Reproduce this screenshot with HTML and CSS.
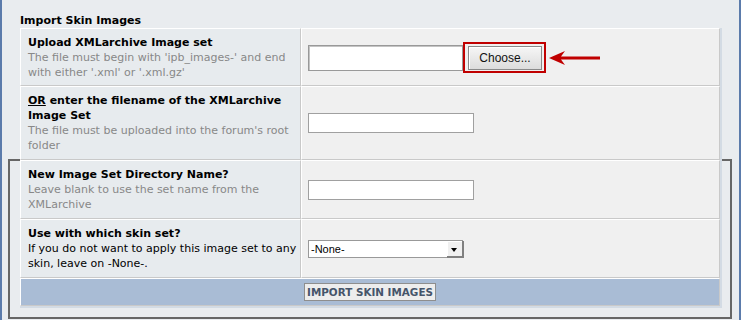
FILE: index.html
```html
<!DOCTYPE html>
<html lang="en">
<head>
  <meta charset="UTF-8">
  <title>Import Skin Images</title>
  <link rel="stylesheet" href="styles.css">
</head>
<body>

  <div class="page">
    <h2 class="section-title">Import Skin Images</h2>

    <div class="frame">
      <table class="form-table">
        <tr class="first-row">
          <td class="label-cell">
            <b>Upload XMLarchive Image set</b>
            <div class="desc">The file must begin with 'ipb_images-' and end with either '.xml' or '.xml.gz'</div>
          </td>
          <td class="field-cell">
            <div class="upload">
              <input type="text" class="file-text">
              <span class="highlight"><button class="choose-btn">Choose...</button></span>
              <svg class="arrow" width="52" height="16" viewBox="0 0 52 16">
                <path d="M0 8 L16 1 L12 6.5 L51 6.5 L51 9.5 L12 9.5 L16 15 Z" fill="#c00000"/>
              </svg>
            </div>
          </td>
        </tr>
        <tr>
          <td class="label-cell">
            <b><u>OR</u> enter the filename of the XMLarchive Image Set</b>
            <div class="desc">The file must be uploaded into the forum's root folder</div>
          </td>
          <td class="field-cell"><input type="text" class="text-input"></td>
        </tr>
        <tr>
          <td class="label-cell">
            <b>New Image Set Directory Name?</b>
            <div class="desc">Leave blank to use the set name from the XMLarchive</div>
          </td>
          <td class="field-cell"><input type="text" class="text-input"></td>
        </tr>
        <tr>
          <td class="label-cell">
            <b>Use with which skin set?</b>
            <div>If you do not want to apply this image set to any skin, leave on -None-.</div>
          </td>
          <td class="field-cell">
            <span class="select-wrap">
              <select class="skin-select">
                <option>-None-</option>
              </select>
            </span>
          </td>
        </tr>
        <tr>
          <td class="submit-row" colspan="2">
            <button class="submit-btn">IMPORT SKIN IMAGES</button>
          </td>
        </tr>
      </table>
    </div>
  </div>

</body>
</html>
```

FILE: styles.css
```css
body {
  margin: 0;
  background: #e9ecef;
  color: #000;
  font-family: 'DejaVu Sans', Verdana, sans-serif;
  font-size: 11px;
}

.page {
  height: 320px;
  box-sizing: border-box;
  border-left: 2px solid #5b7bab;
  border-right: 2px solid #5b7bab;
  padding: 13px 7px 0 6px;
  overflow: hidden;
}

.section-title {
  margin: 0 0 0 12px;
  font-size: 11px;
  line-height: 15px;
}

.frame {
  margin-top: 131px;
  border: 2px solid #666;
  padding: 0 8px 9px 10px;
}

.form-table {
  margin-top: -133px;
  width: 702px;
  border-collapse: separate;
  border-spacing: 0;
  border-right: 2px solid #d3dbe4;
  border-bottom: 2px solid #d3dbe4;
}

.form-table td {
  border-top: 1px solid #fff;
  border-left: 1px solid #fff;
  border-right: 1px solid #c9c9c9;
  border-bottom: 1px solid #c9c9c9;
  padding: 6px 7px;
  line-height: 15px;
  vertical-align: middle;
}

.form-table .first-row td {
  padding-bottom: 5px;
}

.form-table td.label-cell {
  width: 271px;
  padding-right: 1px;
  background: #e7ebee;
}

.form-table td.field-cell {
  padding-left: 6px;
  background: #f0f0f0;
}

.desc {
  color: #888;
}

.upload {
  display: flex;
  align-items: center;
}

.file-text {
  width: 155px;
  height: 26px;
  box-sizing: border-box;
  border: 1px solid #999;
  box-shadow: inset 1px 1px 0 #c4c4c4;
  margin: 0;
}

.highlight {
  display: inline-block;
  border: 2px solid #c00000;
  padding: 2px 2px 1px 3px;
}

.choose-btn {
  display: block;
  width: 74px;
  height: 24px;
  border: 1px solid #8a8a8a;
  background: linear-gradient(#f6f6f6, #dcdcdc);
  box-shadow: inset 1px 1px 0 #fff;
  font-family: 'Liberation Sans', Arial, sans-serif;
  font-size: 12px;
  color: #111;
  padding: 0;
}

.arrow {
  display: block;
  margin-left: 3px;
}

.text-input {
  width: 166px;
  height: 20px;
  box-sizing: border-box;
  border: 1px solid #a0a0a0;
  background: #fff;
  margin: 0;
  vertical-align: middle;
}

.select-wrap {
  position: relative;
  display: inline-block;
  vertical-align: middle;
}

.skin-select {
  appearance: none;
  -webkit-appearance: none;
  display: block;
  width: 155px;
  height: 18px;
  margin: 0;
  padding: 0 2px;
  border: 1px solid #999;
  border-radius: 0;
  background: #fff;
  font-family: 'Liberation Sans', Arial, sans-serif;
  font-size: 11px;
  color: #000;
}

.select-wrap::after {
  content: "";
  position: absolute;
  top: 1px;
  right: -1px;
  width: 15px;
  height: 15px;
  background: #f0f0f0;
  border-right: 2px solid #808080;
  border-bottom: 2px solid #808080;
  box-shadow: inset 1px 1px 0 #fff;
}

.select-wrap::before {
  content: "";
  position: absolute;
  top: 8px;
  right: 6px;
  border-left: 3px solid transparent;
  border-right: 3px solid transparent;
  border-top: 4px solid #000;
  z-index: 1;
}

.form-table td.submit-row {
  background: #a9bcd5;
  text-align: center;
  padding: 4px 0;
}

.submit-btn {
  height: 18px;
  padding: 0 2px;
  border: 1px solid #8e8e8e;
  background: #ededed;
  color: #45546a;
  font-family: 'DejaVu Sans', Verdana, sans-serif;
  font-size: 10.4px;
  font-weight: bold;
  vertical-align: middle;
}
```
